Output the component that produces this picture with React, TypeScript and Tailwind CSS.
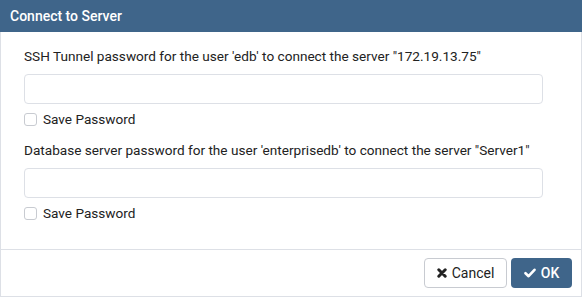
import { useState } from 'react';

const Field = ({ label }: { label: string }) => {
  const [value, setValue] = useState('');
  const [save, setSave] = useState(false);
  return (
    <div>
      <div className="text-[13.6px] leading-[20px] text-[#222222]">{label}</div>
      <input
        type="password"
        className="mt-[8px] block w-[519px] h-[30px] rounded-[4px] border border-[#dde0e6] bg-white px-2 outline-none"
        value={value}
        onChange={e => setValue(e.target.value)}
      />
      <label className="mt-[7px] flex items-center gap-[6px] text-[13.6px] leading-[16px] text-[#222222]">
        <input
          type="checkbox"
          className="appearance-none w-[13px] h-[13px] rounded-[3px] border border-[#c8cbd1] bg-white"
          checked={save}
          onChange={e => setSave(e.target.checked)}
        />
        Save Password
      </label>
    </div>
  );
};

const App = () => {
  return (
    <div className="w-[583px] h-[297px] bg-white font-['Roboto',_'Liberation_Sans',_sans-serif]">
      <div className="flex h-full w-[582px] flex-col border-l border-r border-b border-[#dde0e6]">
        <div className="h-[32px] -ml-px w-[582px] bg-[#3f658a] pl-[10px] flex items-center text-[14px] font-medium text-white">
          Connect to Server
        </div>
        <div className="flex-1 pl-[23px] pt-[14px] space-y-[13px]">
          <Field label={`SSH Tunnel password for the user 'edb' to connect the server "172.19.13.75"`} />
          <Field label={`Database server password for the user 'enterprisedb' to connect the server "Server1"`} />
        </div>
        <div className="h-[47px] border-t border-[#dde0e6] flex items-center justify-end gap-[4px] pr-[9px]">
          <button className="h-[30px] w-[83px] rounded-[4px] border border-[#c8cbd1] bg-white flex items-center justify-center gap-[5px] text-[14px] text-[#222222]">
            <svg viewBox="0 0 10 10" className="w-[10px] h-[10px]">
              <path d="M1.8 1.8 L8.2 8.2 M8.2 1.8 L1.8 8.2" stroke="#222" strokeWidth="3" strokeLinecap="round" />
            </svg>
            Cancel
          </button>
          <button className="h-[30px] w-[61px] rounded-[4px] bg-[#3f658a] flex items-center justify-center gap-[5px] text-[14px] font-medium text-white">
            <svg viewBox="0 0 12 10" className="w-[12px] h-[10px]">
              <path d="M1.5 5.2 L4.6 8.2 L10.5 1.8" fill="none" stroke="#fff" strokeWidth="2.6" strokeLinecap="round" strokeLinejoin="round" />
            </svg>
            OK
          </button>
        </div>
      </div>
    </div>
  );
};

export default App;
